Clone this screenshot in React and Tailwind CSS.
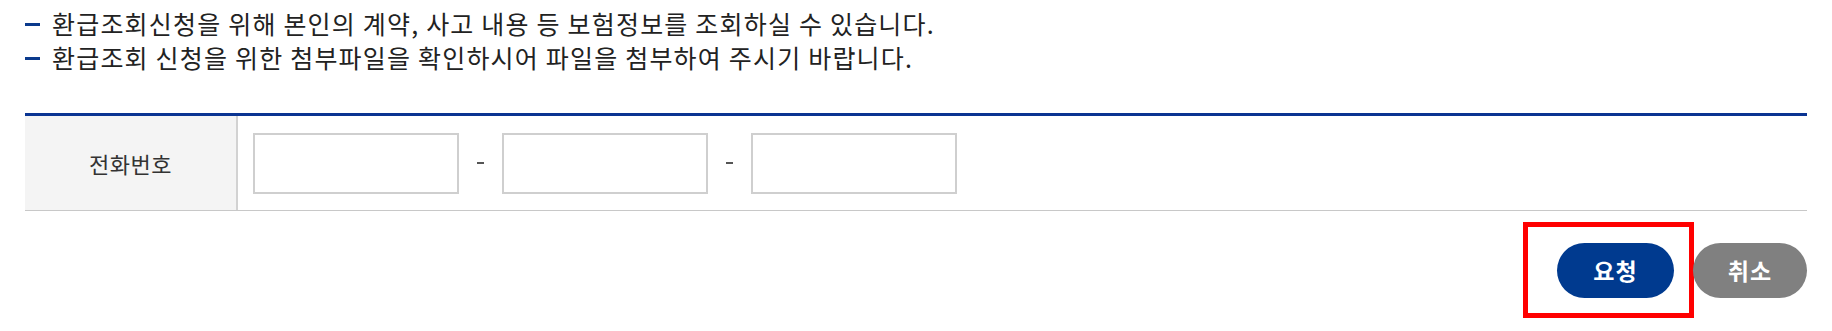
export default function App() {
  const notes = [
    "환급조회신청을 위해 본인의 계약, 사고 내용 등 보험정보를 조회하실 수 있습니다.",
    "환급조회 신청을 위한 첨부파일을 확인하시어 파일을 첨부하여 주시기 바랍니다.",
  ];

  return (
    <div
      className="w-full bg-white px-[25px] pt-[7px] text-[#222]"
      style={{ fontFamily: '"Noto Sans CJK KR", "Noto Sans", sans-serif' }}
    >
      {/* notice */}
      <ul>
        {notes.map((t) => (
          <li key={t} className="flex items-center h-[34px] text-[25px] tracking-[1.2px]">
            <span className="inline-block w-[15px] h-[3px] bg-[#0b3a8c] mr-[12px]" />
            {t}
          </li>
        ))}
      </ul>

      {/* form table */}
      <div className="mt-[38px] border-t-[3px] border-[#0a3492] border-b border-b-[#c8c8c8] flex h-[98px]">
        <div className="w-[213px] shrink-0 bg-[#f4f4f4] border-r-2 border-[#d2d2d2] flex items-center justify-center text-[22px] tracking-[0.5px] text-[#333]">
          전화번호
        </div>
        <div className="flex items-center pl-[15px]">
          <input className="w-[206px] h-[61px] border-2 border-[#cfcfcf] outline-none" />
          <span className="w-[43px] flex justify-center">
            <span className="inline-block w-[7px] h-[2px] bg-[#555]" />
          </span>
          <input className="w-[206px] h-[61px] border-2 border-[#cfcfcf] outline-none" />
          <span className="w-[43px] flex justify-center">
            <span className="inline-block w-[7px] h-[2px] bg-[#555]" />
          </span>
          <input className="w-[206px] h-[61px] border-2 border-[#cfcfcf] outline-none" />
        </div>
      </div>

      {/* buttons */}
      <div className="flex justify-end items-start mt-[11px]">
        <div className="border-[5px] border-[#ff0000] pl-[29px] pr-[15px] pt-[16px] pb-[15px]">
          <button className="w-[117px] h-[55px] rounded-full bg-[#003a8f] text-white font-bold text-[23px] tracking-[1px]">
            요청
          </button>
        </div>
        <button className="-ml-[1px] mt-[21px] w-[114px] h-[55px] rounded-full bg-[#808080] text-white font-bold text-[23px] tracking-[1px]">
          취소
        </button>
      </div>
    </div>
  );
}
